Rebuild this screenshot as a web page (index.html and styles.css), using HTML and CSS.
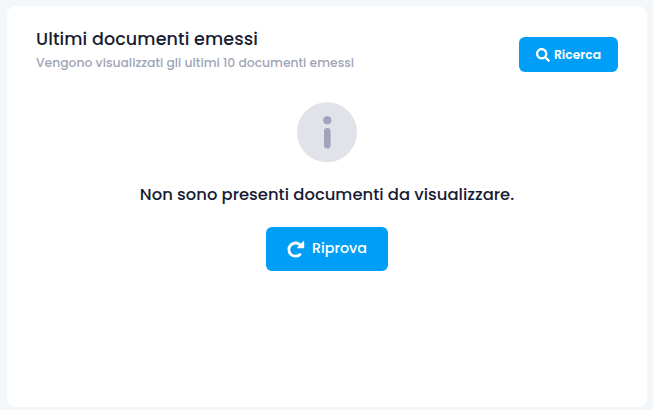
FILE: index.html
```html
<!DOCTYPE html>
<html lang="it">
<head>
<meta charset="utf-8">
<title>Ultimi documenti emessi</title>
<link rel="stylesheet" href="styles.css">
</head>
<body>
<section class="card">
  <header class="card-header">
    <div class="heading">
      <h1 class="title"><span>Ultimi documenti emessi</span></h1>
      <p class="subtitle"><span>Vengono visualizzati gli ultimi 10 documenti emessi</span></p>
    </div>
    <button class="btn btn-search" type="button">
      <svg class="icon-search" viewBox="0 0 512 512" aria-hidden="true"><path fill="currentColor" d="M505 442.700L405.300 343c-4.500-4.500-10.600-7-17-7H372c27.600-35.300 44-79.700 44-128C416 93.100 322.900 0 208 0S0 93.100 0 208s93.100 208 208 208c48.300 0 92.700-16.400 128-44v16.300c0 6.400 2.500 12.500 7 17l99.700 99.700c9.400 9.400 24.600 9.400 33.900 0l28.300-28.300c9.400-9.400 9.400-24.600.1-34zM208 336c-70.700 0-128-57.200-128-128 0-70.700 57.200-128 128-128 70.700 0 128 57.200 128 128 0 70.700-57.200 128-128 128z"/></svg>
      <span>Ricerca</span>
    </button>
  </header>
  <div class="empty">
    <svg class="icon-info" viewBox="0 0 60 60" aria-hidden="true"><circle cx="30" cy="30.300" r="30" fill="#e2e3e9"/><circle cx="30.300" cy="18.300" r="4.100" fill="#9fa4bb"/><rect x="27" y="26" width="6.600" height="20.500" rx="3" fill="#9fa4bb"/></svg>
    <p class="message"><span>Non sono presenti documenti da visualizzare.</span></p>
    <button class="btn btn-retry" type="button">
      <svg class="icon-retry" viewBox="0 0 18 18" aria-hidden="true"><path d="M13 4.800A6.600 6.600 0 1 0 13 14.400" fill="none" stroke="currentColor" stroke-width="2.800" stroke-linecap="round"/><path d="M16.600 1.700V7.700H10.800Z" fill="currentColor" stroke="currentColor" stroke-width="1.200" stroke-linejoin="round"/></svg>
      <span>Riprova</span>
    </button>
  </div>
</section>
</body>
</html>
```
FILE: styles.css
```css
* {
  box-sizing: border-box;
}

body {
  margin: 0;
  padding: 6px 6px 3px 7px;
  height: 410px;
  overflow: hidden;
  background: #f4f7fa;
  font-family: Poppins, Inter, sans-serif;
}

.card {
  height: 401px;
  padding: 21px 29px 0;
  border-radius: 9px;
  background: #fff;
}

.card-header {
  display: flex;
  justify-content: space-between;
  height: 75px;
}

.title,
.subtitle,
.message {
  margin: 0;
  white-space: nowrap;
}

.title {
  font-size: 17.550px;
  line-height: 24px;
  font-weight: 500;
  letter-spacing: 0.1px;
  color: #181c32;
}

.subtitle {
  font-size: 12.350px;
  line-height: 22px;
  margin-top: 1px;
  font-weight: 500;
  color: #a1a5b7;
}

.btn {
  display: flex;
  align-items: center;
  justify-content: center;
  padding: 0;
  border: 0;
  border-radius: 6px;
  background: #009ef7;
  color: #fff;
  font-family: inherit;
}

.btn-search {
  width: 99px;
  height: 35px;
  margin-top: 10px;
  gap: 4px;
  font-size: 12.350px;
  font-weight: 600;
}

.icon-search {
  width: 14px;
  height: 14px;
}

.empty {
  display: flex;
  flex-direction: column;
  align-items: center;
}

.icon-info {
  width: 60px;
  height: 60px;
  overflow: visible;
}

.message {
  margin: 21px 0 19px;
  font-size: 16.400px;
  line-height: 24px;
  font-weight: 500;
  color: #181c32;
}

.btn-retry {
  width: 122px;
  height: 44px;
  margin-top: 1px;
  padding-bottom: 1px;
  gap: 7px;
  font-size: 14.300px;
  font-weight: 500;
}

.icon-retry {
  width: 18px;
  height: 18px;
  margin-top: 1px;
}
```
